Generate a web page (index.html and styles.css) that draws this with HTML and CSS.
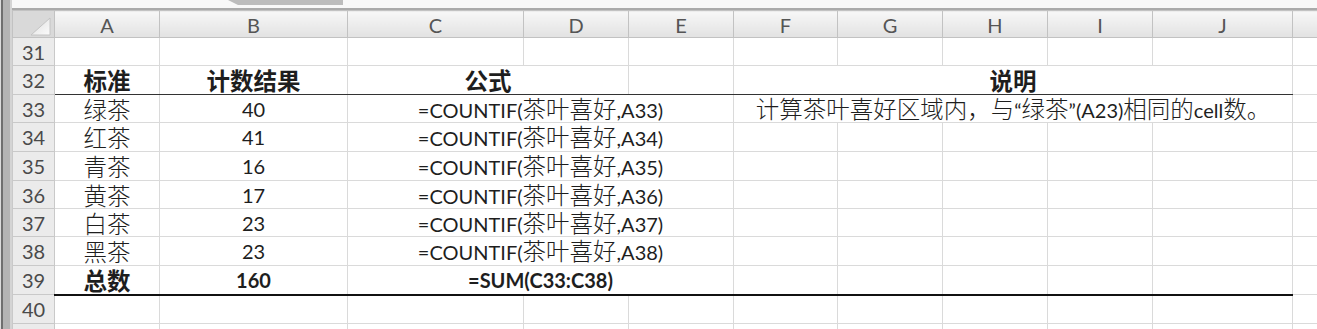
FILE: index.html
```html
<!DOCTYPE html>
<html lang="zh-CN">
<head>
  <meta charset="UTF-8" />
  <title>茶叶喜好统计</title>
  <meta name="viewport" content="width=device-width, initial-scale=1.0" />
  <link rel="stylesheet" href="styles.css">
</head>
<body>

  <div class="window">
    <div class="edge"></div>

    <div class="sheet">
      <div class="ribbon"><div class="tab"></div></div>

      <table class="grid">
        <colgroup>
          <col class="c-head">
          <col class="c-a">
          <col class="c-b">
          <col class="c-c">
          <col class="c-d">
          <col class="c-e">
          <col class="c-f">
          <col class="c-g">
          <col class="c-h">
          <col class="c-i">
          <col class="c-j">
          <col class="c-k">
        </colgroup>

        <thead>
          <tr class="colheads">
            <th class="corner">
              <svg width="21" height="19" viewBox="0 0 21 19">
                <defs>
                  <linearGradient id="cornerFill" x1="0" y1="0" x2="1" y2="1">
                    <stop offset="0" stop-color="#dedede" />
                    <stop offset="1" stop-color="#fbfbfb" />
                  </linearGradient>
                </defs>
                <polygon points="1,18 20,18 20,1" fill="url(#cornerFill)" stroke="#c4c4c4" stroke-width="1" />
              </svg>
            </th>
            <th>A</th>
            <th>B</th>
            <th>C</th>
            <th>D</th>
            <th>E</th>
            <th>F</th>
            <th>G</th>
            <th>H</th>
            <th>I</th>
            <th>J</th>
            <th></th>
          </tr>
        </thead>

        <tbody>
          <tr class="h28">
            <th>31</th>
            <td></td><td></td><td></td><td></td><td></td>
            <td></td><td></td><td></td><td></td><td></td>
            <td class="spare"></td>
          </tr>

          <tr class="h29 title-row">
            <th>32</th>
            <td class="b zh">标准</td>
            <td class="b zh">计数结果</td>
            <td class="b zh" colspan="2">公式</td>
            <td></td>
            <td class="b zh" colspan="5">说明</td>
            <td class="spare"></td>
          </tr>

          <tr class="h28">
            <th>33</th>
            <td class="zh">绿茶</td>
            <td>40</td>
            <td colspan="3">=COUNTIF(<span class="zh">茶叶喜好</span>,A33)</td>
            <td colspan="5"><span class="zh">计算茶叶喜好区域内，与</span>“<span class="zh">绿茶</span>”(A23)<span class="zh">相同的</span>cell<span class="zh">数。</span></td>
            <td class="spare"></td>
          </tr>

          <tr class="h29">
            <th>34</th>
            <td class="zh">红茶</td>
            <td>41</td>
            <td colspan="3">=COUNTIF(<span class="zh">茶叶喜好</span>,A34)</td>
            <td></td><td></td><td></td><td></td><td></td>
            <td class="spare"></td>
          </tr>

          <tr class="h29">
            <th>35</th>
            <td class="zh">青茶</td>
            <td>16</td>
            <td colspan="3">=COUNTIF(<span class="zh">茶叶喜好</span>,A35)</td>
            <td></td><td></td><td></td><td></td><td></td>
            <td class="spare"></td>
          </tr>

          <tr class="h28">
            <th>36</th>
            <td class="zh">黄茶</td>
            <td>17</td>
            <td colspan="3">=COUNTIF(<span class="zh">茶叶喜好</span>,A36)</td>
            <td></td><td></td><td></td><td></td><td></td>
            <td class="spare"></td>
          </tr>

          <tr class="h28">
            <th>37</th>
            <td class="zh">白茶</td>
            <td>23</td>
            <td colspan="3">=COUNTIF(<span class="zh">茶叶喜好</span>,A37)</td>
            <td></td><td></td><td></td><td></td><td></td>
            <td class="spare"></td>
          </tr>

          <tr class="h29">
            <th>38</th>
            <td class="zh">黑茶</td>
            <td>23</td>
            <td colspan="3">=COUNTIF(<span class="zh">茶叶喜好</span>,A38)</td>
            <td></td><td></td><td></td><td></td><td></td>
            <td class="spare"></td>
          </tr>

          <tr class="h29 total-row">
            <th>39</th>
            <td class="b zh">总数</td>
            <td class="b">160</td>
            <td class="b" colspan="3">=SUM(C33:C38)</td>
            <td></td><td></td><td></td><td></td><td></td>
            <td class="spare"></td>
          </tr>

          <tr class="h29">
            <th>40</th>
            <td></td><td></td><td></td><td></td><td></td>
            <td></td><td></td><td></td><td></td><td></td>
            <td class="spare"></td>
          </tr>

          <!-- next row only peeks in under the window edge -->
          <tr class="h29">
            <th></th>
            <td></td><td></td><td></td><td></td><td></td>
            <td></td><td></td><td></td><td></td><td></td>
            <td class="spare"></td>
          </tr>
        </tbody>
      </table>
    </div>
  </div>

</body>
</html>
```

FILE: styles.css
```css
body {
  margin: 0;
  background: #ffffff;
  overflow: hidden;
  font-family: Lato, "Noto Sans CJK SC", sans-serif;
  color: #1e1e1e;
}

.window {
  display: flex;
  height: 329px;
  overflow: hidden;
}

/* scrollbar sliver on the far left */
.edge {
  width: 12px;
  flex-shrink: 0;
  background: linear-gradient(to right,
    #dcdcdc 0 1px,
    #6f6f6f 1px 3px,
    #b4b4b4 3px 10px,
    #d4d4d4 10px 12px);
}

.sheet {
  flex: 1;
  overflow: hidden;
}

/* formula bar edge above the column letters */
.ribbon {
  display: flex;
  height: 8px;
  background: #f8f8f8;
  border-bottom: 2px solid #aaaaaa;
}

.tab {
  margin-left: 216px;
  width: 115px;
  height: 5px;
  background: #bcbcbc;
  clip-path: polygon(0 0, 100% 0, 100% 100%, 10px 100%);
}

/* the worksheet */
.grid {
  border-collapse: collapse;
  table-layout: fixed;
  width: 1320px;
  font-size: 20px;
  line-height: 22px;
}

.c-head { width: 42px; }
.c-a { width: 105px; }
.c-b { width: 188px; }
.c-c { width: 176px; }
.c-d { width: 105px; }
.c-e { width: 105px; }
.c-f { width: 104px; }
.c-g { width: 105px; }
.c-h { width: 105px; }
.c-i { width: 105px; }
.c-j { width: 140px; }
.c-k { width: 40px; }

.grid th,
.grid td {
  padding: 0;
  white-space: nowrap;
  vertical-align: middle;
  text-align: center;
}

.grid td {
  border: 1px solid #dadada;
}

.colheads {
  height: 27px;
}

.colheads th {
  padding-top: 1px;
  background: linear-gradient(#f7f7f7, #e2e2e2);
  border: 1px solid #c2c2c2;
  color: #555555;
  font-weight: normal;
}

.colheads .corner {
  background: #d9d9d9;
  border: 1px solid #c2c2c2;
  text-align: right;
  vertical-align: bottom;
  padding: 0 3px 1px 0;
  line-height: 0;
}

tbody th {
  background: #ebebeb;
  border: 1px solid #c9c9c9;
  color: #4a4a4a;
  font-weight: normal;
}

.h28 { height: 28px; }
.h29 { height: 29px; }

.zh {
  font-family: "Noto Sans CJK SC", sans-serif;
  font-size: 23.5px;
  font-weight: 300;
  line-height: 22px;
}

.b,
.b .zh,
.b.zh {
  font-weight: 700;
}

.title-row td:not(.spare) {
  border-bottom: 1px solid #333333;
}

.total-row td:not(.spare) {
  border-top: 1px solid #444444;
  border-bottom: 2px solid #111111;
}
```
